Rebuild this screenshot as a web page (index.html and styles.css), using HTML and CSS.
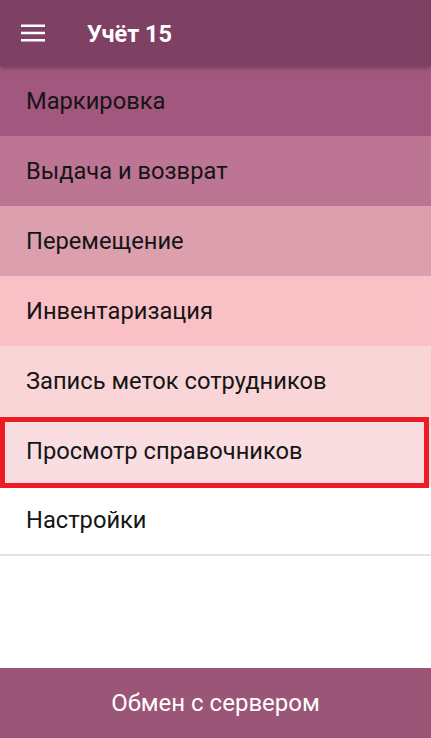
FILE: index.html
```html
<!DOCTYPE html>
<html lang="ru">
<head>
    <meta charset="UTF-8">
    <meta name="viewport" content="width=device-width, initial-scale=1.0">
    <title>Учёт 15</title>
    <link rel="stylesheet" href="styles.css">
</head>
<body>
    <div class="app">
        <div class="toolbar">
            <svg class="menu-icon" width="24" height="20" viewBox="0 0 24 20">
                <rect x="0" y="1.5" width="24" height="2.5" fill="#fff"/>
                <rect x="0" y="8.75" width="24" height="2.5" fill="#fff"/>
                <rect x="0" y="16" width="24" height="2.5" fill="#fff"/>
            </svg>
            <span class="title">Учёт 15</span>
        </div>
        <div class="menu">
            <div class="item c1">Маркировка</div>
            <div class="item c2">Выдача и возврат</div>
            <div class="item c3">Перемещение</div>
            <div class="item c4">Инвентаризация</div>
            <div class="item c5">Запись меток сотрудников</div>
            <div class="item c6 marked">Просмотр справочников</div>
            <div class="item c7">Настройки</div>
        </div>
        <div class="exchange">Обмен с сервером</div>
    </div>
</body>
</html>
```

FILE: styles.css
```css
body {
    margin: 0;
    font-family: Roboto, "Noto Sans", Arial, sans-serif;
    background: #fff;
}
.app {
    width: 431px;
    height: 738px;
    display: flex;
    flex-direction: column;
    overflow: hidden;
}
.toolbar {
    height: 66px;
    flex-shrink: 0;
    background-color: #7f4163;
    display: flex;
    align-items: center;
    padding-left: 21px;
    position: relative;
    z-index: 2;
    box-shadow: 0 2px 4px rgba(0, 0, 0, 0.3);
}
.menu-icon {
    width: 24px;
    height: 20px;
}
.title {
    color: #fff;
    font-size: 23.5px;
    font-weight: bold;
    margin-left: 42px;
    margin-top: 1px;
}
.menu {
    flex: 1;
}
.item {
    height: 70px;
    display: flex;
    align-items: center;
    padding-left: 26px;
    font-size: 23.7px;
    color: #151515;
    box-sizing: border-box;
}
.c1 { background-color: #a2577f; }
.c2 { background-color: #bd7594; }
.c3 { background-color: #dc9fae; }
.c4 { background-color: #f9c1c5; }
.c5 { background-color: #f9d5d7; }
.c6 { background-color: #f9dde0; }
.c7 {
    background-color: #fff;
    border-bottom: 2px solid #e3e3e3;
}
.marked {
    position: relative;
}
.marked::after {
    content: "";
    position: absolute;
    left: 0;
    top: 1px;
    right: 2px;
    bottom: -2px;
    border: 5px solid #ed1c24;
}
.exchange {
    height: 70px;
    flex-shrink: 0;
    background-color: #9a5577;
    color: #fff;
    font-size: 24px;
    display: flex;
    align-items: center;
    justify-content: center;
}
```
